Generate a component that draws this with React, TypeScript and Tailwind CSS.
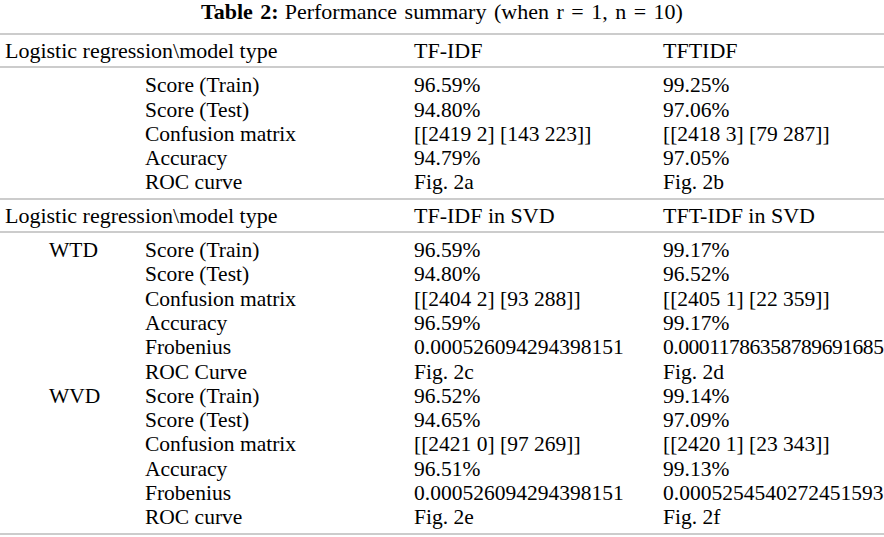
import React from "react";

// Types
interface Row {
  group?: string;
  label: string;
  a: string;
  b: string;
}

// Data
const TOP_ROWS: Row[] = [
  { label: "Score (Train)", a: "96.59%", b: "99.25%" },
  { label: "Score (Test)", a: "94.80%", b: "97.06%" },
  { label: "Confusion matrix", a: "[[2419 2] [143 223]]", b: "[[2418 3] [79 287]]" },
  { label: "Accuracy", a: "94.79%", b: "97.05%" },
  { label: "ROC curve", a: "Fig. 2a", b: "Fig. 2b" },
];

const SVD_ROWS: Row[] = [
  { group: "WTD", label: "Score (Train)", a: "96.59%", b: "99.17%" },
  { label: "Score (Test)", a: "94.80%", b: "96.52%" },
  { label: "Confusion matrix", a: "[[2404 2] [93 288]]", b: "[[2405 1] [22 359]]" },
  { label: "Accuracy", a: "96.59%", b: "99.17%" },
  { label: "Frobenius", a: "0.000526094294398151", b: "0.00011786358789691685" },
  { label: "ROC Curve", a: "Fig. 2c", b: "Fig. 2d" },
  { group: "WVD", label: "Score (Train)", a: "96.52%", b: "99.14%" },
  { label: "Score (Test)", a: "94.65%", b: "97.09%" },
  { label: "Confusion matrix", a: "[[2421 0] [97 269]]", b: "[[2420 1] [23 343]]" },
  { label: "Accuracy", a: "96.51%", b: "99.13%" },
  { label: "Frobenius", a: "0.000526094294398151", b: "0.0005254540272451593" },
  { label: "ROC curve", a: "Fig. 2e", b: "Fig. 2f" },
];

const GRID = "grid grid-cols-[140px_269px_249px_1fr] pl-[5px] leading-[24.3px] whitespace-nowrap";

const Rule = () => <div className="h-[2px] w-full bg-[#cccccc]" />;

const Header: React.FC<{ a: string; b: string }> = ({ a, b }) => (
  <div className={`${GRID} pt-[4px] pb-[3px] text-[22px]`}>
    <div className="col-span-2">Logistic regression\model type</div>
    <div>{a}</div>
    <div>{b}</div>
  </div>
);

const Body: React.FC<{ rows: Row[] }> = ({ rows }) => (
  <div className={`${GRID} pt-[5px] pb-[3px]`}>
    {rows.map((r, i) => (
      <React.Fragment key={i}>
        <div className="pl-[44px]">{r.group ?? ""}</div>
        <div>{r.label}</div>
        <div>{r.a}</div>
        {/* long frobenius value runs to the page edge */}
        <div className={r.b.length > 21 ? "tracking-[-0.45px]" : ""}>{r.b}</div>
      </React.Fragment>
    ))}
  </div>
);

export default function App() {
  return (
    <div className="w-[884px] h-[537px] bg-white text-black overflow-hidden font-['Liberation_Serif','Times_New_Roman',serif] text-[21.5px]">
      <div className="text-center leading-[24px] text-[22px] [word-spacing:2px]">
        <span className="font-bold">Table 2:</span>
        <span className="ml-[6px]">Performance summary (when r = 1, n = 10)</span>
      </div>
      <div className="mt-[9px]">
        <Rule />
        <Header a="TF-IDF" b="TFTIDF" />
        <Rule />
        <Body rows={TOP_ROWS} />
        <Rule />
        <Header a="TF-IDF in SVD" b="TFT-IDF in SVD" />
        <Rule />
        <Body rows={SVD_ROWS} />
        <Rule />
      </div>
    </div>
  );
}
